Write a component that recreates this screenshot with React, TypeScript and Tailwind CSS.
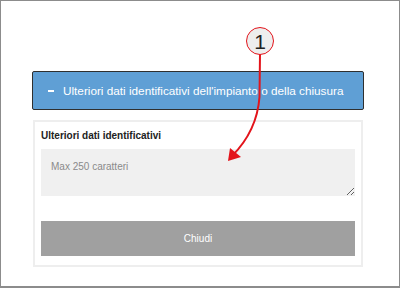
export default function App() {
  return (
    <div
      className="relative w-[400px] h-[288px] border border-b-2 border-[#8c8c8c] bg-white"
      style={{ fontFamily: '"Liberation Sans", Arial, sans-serif' }}
    >
      <div className="pl-[31px] pt-[70px] flex flex-col">
        {/* accordion header */}
        <div className="w-[332px] h-[39px] flex items-center gap-[9px] pl-[15px] bg-[#5f9fd5] border border-[#2f2f2f] rounded-[2px] text-white text-[11.75px] whitespace-nowrap">
          <span className="block w-[6px] h-[2px] bg-white" />
          <span>Ulteriori dati identificativi dell'impianto o della chiusura</span>
        </div>

        {/* panel */}
        <div className="mt-[10px] ml-[1px] w-[330px] h-[147px] border-2 border-[#eeeeee] px-[6px] pt-[7px] flex flex-col">
          <div className="text-[10px] font-bold text-[#222] leading-[14px]">
            Ulteriori dati identificativi
          </div>
          <textarea
            placeholder="Max 250 caratteri"
            className="mt-[6px] h-[47px] w-full bg-[#f0f0f0] px-[10px] pt-[10px] text-[10px] text-[#777] placeholder-[#8a8a8a] outline-none resize-y"
          />
          <button className="mt-[25px] h-[35px] w-full bg-[#a0a0a0] text-white text-[10px]">
            Chiudi
          </button>
        </div>
      </div>

      {/* callout */}
      <svg className="absolute left-0 top-0 pointer-events-none" width="400" height="288">
        <path d="M259 53 L258.5 96 Q256 130 231 155" fill="none" stroke="#e3141b" strokeWidth="2" />
        <polygon points="227,160 229,147 240,156" fill="#e3141b" />
      </svg>
      <div className="absolute left-[245px] top-[26px] w-[28px] h-[28px] rounded-full border border-[#e3141b] bg-[#eeeeee] flex items-center justify-center text-[21px] text-[#222] leading-none">
        1
      </div>
    </div>
  );
}
